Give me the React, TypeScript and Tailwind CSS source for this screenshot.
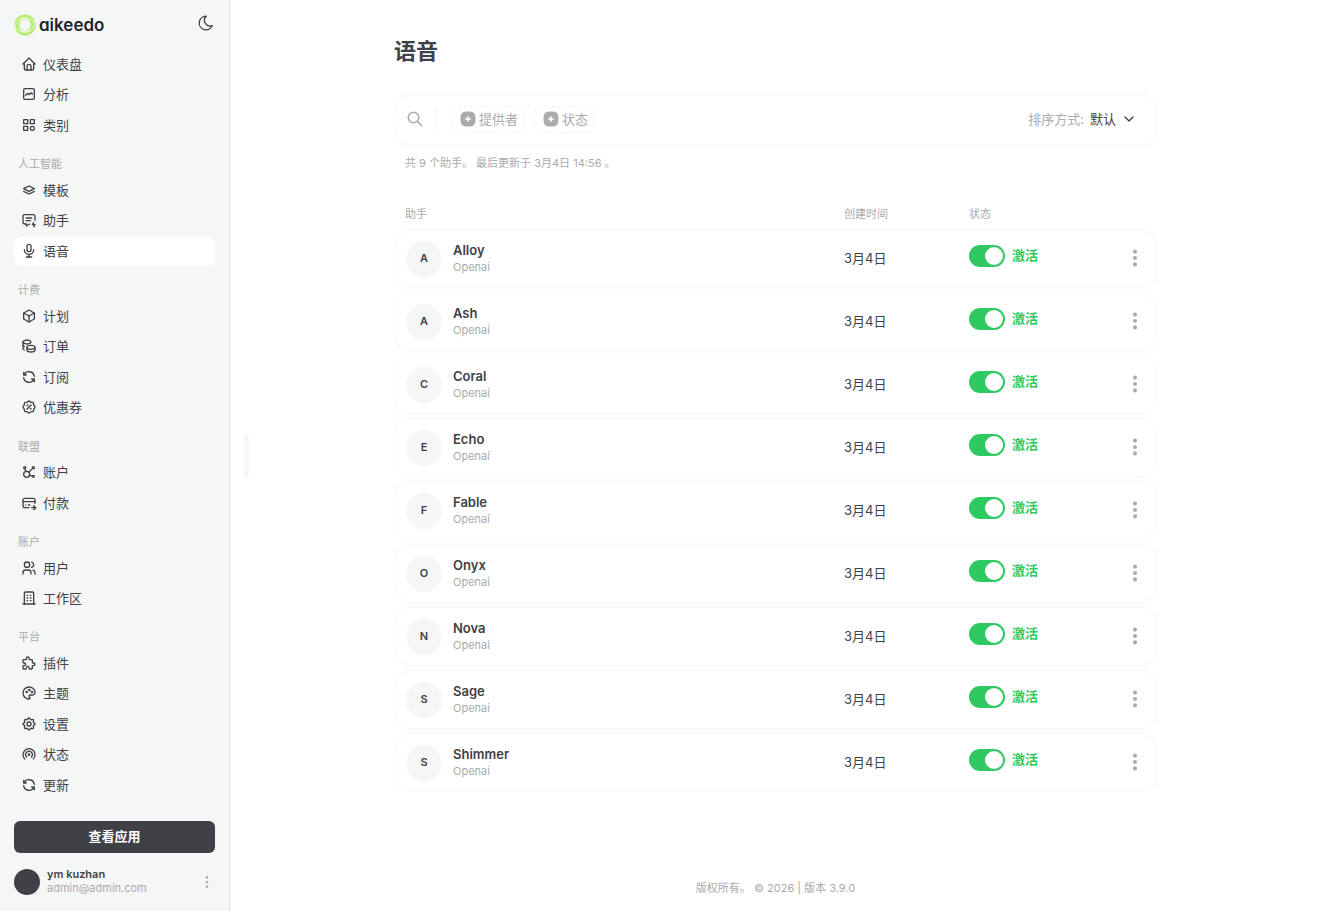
import { useState } from "react";
import type { IconType } from "react-icons";
import {
  TbAffiliate,
  TbBox,
  TbBroadcast,
  TbBuilding,
  TbCategory,
  TbChevronDown,
  TbCoins,
  TbCreditCardPay,
  TbDotsVertical,
  TbGraph,
  TbHome,
  TbMessageBolt,
  TbMicrophone,
  TbMoon,
  TbPalette,
  TbPuzzle,
  TbRefresh,
  TbRosetteDiscount,
  TbSearch,
  TbSettings,
  TbSquareRoundedPlusFilled,
  TbStack,
  TbUsers,
} from "react-icons/tb";

interface NavEntry {
  label: string;
  icon?: IconType;
  active?: boolean;
}

// Entries without an icon are section headings
const nav: NavEntry[] = [
  { label: "仪表盘", icon: TbHome },
  { label: "分析", icon: TbGraph },
  { label: "类别", icon: TbCategory },
  { label: "人工智能" },
  { label: "模板", icon: TbStack },
  { label: "助手", icon: TbMessageBolt },
  { label: "语音", icon: TbMicrophone, active: true },
  { label: "计费" },
  { label: "计划", icon: TbBox },
  { label: "订单", icon: TbCoins },
  { label: "订阅", icon: TbRefresh },
  { label: "优惠券", icon: TbRosetteDiscount },
  { label: "联盟" },
  { label: "账户", icon: TbAffiliate },
  { label: "付款", icon: TbCreditCardPay },
  { label: "账户" },
  { label: "用户", icon: TbUsers },
  { label: "工作区", icon: TbBuilding },
  { label: "平台" },
  { label: "插件", icon: TbPuzzle },
  { label: "主题", icon: TbPalette },
  { label: "设置", icon: TbSettings },
  { label: "状态", icon: TbBroadcast },
  { label: "更新", icon: TbRefresh },
];

const voices = ["Alloy", "Ash", "Coral", "Echo", "Fable", "Onyx", "Nova", "Sage", "Shimmer"];

const Logo = () => (
  <a href="#" className="flex items-center gap-[3px] text-[#24272c]">
    <svg viewBox="0 0 44 44" className="size-[22px]" fill="none" strokeLinecap="round">
      <circle cx="22" cy="22" r="16.5" stroke="#b5ec6b" strokeWidth="9.5" />
      {/* Light grooves that cut the ring into two swirls */}
      <g stroke="#f5f7f7" strokeWidth="1.8">
        <path d="M3 29C2 14 14 4 28 8c5 1 9 5 10 8" />
        <path d="M41 15c1 15-11 25-25 21-5-1-9-5-10-8" />
        <path d="M11 12c6-5 15-5 20 0" />
        <path d="M33 32c-6 5-15 5-20 0" />
      </g>
    </svg>
    <span className="text-[17px] leading-5 font-semibold [font-feature-settings:'cv11']">aikeedo</span>
  </a>
);

const Sidebar = () => (
  <aside className="sticky top-0 flex h-screen w-[230px] shrink-0 flex-col border-r border-[#e1e3e3] bg-[#f5f7f7] px-[14px] pb-4">
    <div className="flex h-[50px] items-center justify-between">
      <Logo />
      <button type="button" aria-label="主题模式" className="pb-1">
        <TbMoon className="size-[18px]" strokeWidth={1.75} />
      </button>
    </div>

    <nav className="flex flex-1 flex-col justify-between">
      {nav.map(({ label, icon: Icon, active }, i) =>
        Icon ? (
          <a
            key={i}
            href="#"
            className={`flex h-[29px] items-center gap-[6px] rounded-lg px-[7px] pb-px ${active ? "bg-white" : ""}`}
          >
            <Icon className="size-4" strokeWidth={2} />
            {label}
          </a>
        ) : (
          <h2 key={i} className="flex h-[33px] items-end px-1 pb-[2px] text-[11px] leading-4 text-[#a9abad]">
            {label}
          </h2>
        )
      )}
    </nav>

    <button type="button" className="mt-[21px] h-8 shrink-0 rounded-md bg-[#3f4146] pb-[2px] font-bold text-white">
      查看应用
    </button>

    <div className="mt-4 flex h-[26px] items-center">
      <div className="size-[26px] rounded-full bg-[#3f4146]" />
      <div className="ml-[7px] flex-1 pb-[2px] text-[11px] leading-[14px]">
        <p className="font-semibold">ym kuzhan</p>
        <p className="text-[#a9abad]">admin@admin.com</p>
      </div>
      <button type="button" aria-label="账户菜单" className="text-[#a9abad]">
        <TbDotsVertical className="size-4" />
      </button>
    </div>
  </aside>
);

const FilterButton = ({ label }: { label: string }) => (
  <button
    type="button"
    className="flex h-[27px] items-center gap-[2px] rounded-lg border border-dashed border-[#f0f1f1] pr-[6px] pl-[7px] text-[#a9abad]"
  >
    <TbSquareRoundedPlusFilled className="size-[18px]" />
    {label}
  </button>
);

const VoiceRow = ({ name }: { name: string }) => {
  const [enabled, setEnabled] = useState(true);

  return (
    <tr className="h-[59px]">
      <td className="rounded-l-2xl border-y border-l border-[#f5f6f6] pl-[11px]">
        <div className="flex items-center gap-[11px]">
          <div className="flex size-9 items-center justify-center rounded-full bg-[#f5f7f7] pb-[2px] text-[11px] font-semibold">
            {name[0]}
          </div>
          <div className="pb-px">
            <p className="leading-[18px] font-semibold">{name}</p>
            <p className="text-[11px] leading-4 text-[#a9abad]">Openai</p>
          </div>
        </div>
      </td>
      <td className="border-y border-[#f5f6f6] pb-px">3月4日</td>
      <td className="border-y border-[#f5f6f6] pb-[5px]">
        <label className="flex w-fit items-center gap-[7px] font-bold text-[#2fc961]">
          <input
            type="checkbox"
            checked={enabled}
            onChange={(e) => setEnabled(e.target.checked)}
            className="h-[22px] w-9 appearance-none rounded-full bg-[#d5d7d7] p-[2px] before:block before:size-[18px] before:rounded-full before:bg-white checked:bg-[#2fc961] checked:before:translate-x-[14px]"
          />
          <span className="pb-[2px]">激活</span>
        </label>
      </td>
      <td className="rounded-r-2xl border-y border-r border-[#f5f6f6] pr-[10px] pb-[2px] text-right">
        <button type="button" aria-label={`${name} 菜单`} className="align-middle text-[#a9abad]">
          <TbDotsVertical className="size-[22px]" strokeWidth={2.5} />
        </button>
      </td>
    </tr>
  );
};

const App = () => {
  return (
    <div className="flex min-h-screen bg-white font-['Inter','Noto_Sans_CJK_SC',sans-serif] text-[13px] leading-5 text-[#3f4146]">
      <Sidebar />

      <main className="relative flex min-w-0 flex-1 flex-col items-center px-6">
        {/* Sidebar resize handle */}
        <div className="absolute top-1/2 left-[14px] h-11 w-[5px] -translate-y-1/2 rounded-full bg-[#f5f7f7]" />

        <div className="w-full max-w-[763px] flex-1">
          <h1 className="pt-9 text-[22px] leading-[30px] font-bold">语音</h1>

          {/* Filters */}
          <div className="mt-7 flex h-[52px] items-center rounded-2xl border border-[#f5f6f6] px-[11px] pb-[2px]">
            <button type="button" aria-label="搜索" className="text-[#a9abad]">
              <TbSearch className="size-[18px]" />
            </button>
            <div className="mr-[15px] ml-[11px] h-[22px] w-px bg-[#f5f6f6]" />
            <div className="flex gap-[9px]">
              <FilterButton label="提供者" />
              <FilterButton label="状态" />
            </div>
            <label htmlFor="sort" className="ml-auto text-[#a9abad]">
              排序方式:
            </label>
            <div className="relative mr-2 ml-[6px]">
              <select id="sort" className="block appearance-none bg-transparent pr-5 outline-none">
                <option>默认</option>
              </select>
              <TbChevronDown className="pointer-events-none absolute top-0.5 right-0 size-4" />
            </div>
          </div>

          <p className="mt-[9px] px-[11px] text-[11px] leading-4 text-[#a9abad]">
            共 9 个助手。 最后更新于 3月4日 14:56 。
          </p>

          <table className="mt-[30px] w-full table-fixed border-separate border-spacing-x-0 border-spacing-y-1">
            <thead className="text-left text-[11px] leading-4 text-[#a9abad]">
              <tr className="h-5">
                <th className="pb-[2px] pl-[11px] font-normal">助手</th>
                <th className="w-[125px] pb-[2px] font-normal">创建时间</th>
                <th className="w-[125px] pb-[2px] font-normal">状态</th>
                <th className="w-[63px]" />
              </tr>
            </thead>
            <tbody>
              {voices.map((name) => (
                <VoiceRow key={name} name={name} />
              ))}
            </tbody>
          </table>
        </div>

        <footer className="pt-6 pb-[15px] text-[11px] leading-4 text-[#a9abad]">
          版权所有。 © 2026 | 版本 3.9.0
        </footer>
      </main>
    </div>
  );
};

export default App;
